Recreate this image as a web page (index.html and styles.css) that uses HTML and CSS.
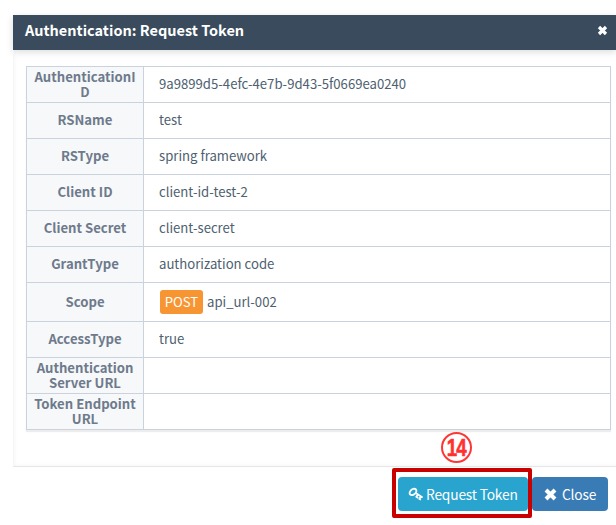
FILE: index.html
```html
<!DOCTYPE html>
<html lang="en">
<head>
<meta charset="utf-8">
<title>Authentication: Request Token</title>
<link rel="stylesheet" href="styles.css">
</head>
<body>
<div class="dialog">
  <header class="dialog-header">
    <h1 class="title">Authentication: Request Token</h1>
    <svg class="dismiss" viewBox="0 0 11 11"><path d="M2 2L9 9M9 2L2 9"/></svg>
  </header>
  <main class="dialog-body">
    <table class="details">
      <tr><th>AuthenticationI<br>D</th><td>9a9899d5-4efc-4e7b-9d43-5f0669ea0240</td></tr>
      <tr><th>RSName</th><td>test</td></tr>
      <tr><th>RSType</th><td>spring framework</td></tr>
      <tr><th>Client ID</th><td>client-id-test-2</td></tr>
      <tr><th>Client Secret</th><td>client-secret</td></tr>
      <tr><th>GrantType</th><td>authorization code</td></tr>
      <tr class="scope"><th>Scope</th><td><div class="scope-value"><span class="method">POST</span><span>api_url-002</span></div></td></tr>
      <tr><th>AccessType</th><td>true</td></tr>
      <tr><th>Authentication<br>Server URL</th><td></td></tr>
      <tr><th>Token Endpoint<br>URL</th><td></td></tr>
    </table>
  </main>
  <footer class="dialog-footer">
    <div class="button request">
      <svg class="key" viewBox="0 0 16 14"><path d="M2.2 7.6C0.6 6 2.6 2.6 5.2 1.9C7.6 1.3 8.9 3 8.2 5C7.5 7.2 4.2 9 2.2 7.6ZM7.4 5.8L14.6 10.6M9.8 7.6L8.4 9.8L10.2 11M12.8 9.4L11.4 11.8L13 12.6"/></svg>
      <span>Request Token</span>
    </div>
    <div class="button close">
      <svg class="cross" viewBox="0 0 13 13"><path d="M2 2L11 11M11 2L2 11"/></svg>
      <span>Close</span>
    </div>
  </footer>
</div>
<div class="highlight"></div>
<div class="step"><span>14</span></div>
</body>
</html>
```
FILE: styles.css
```css
* { box-sizing: border-box; }
body {
  margin: 0;
  height: 525px;
  overflow: hidden;
  background: #fff;
  color: #4e5f70;
  font: 13.15px/18px "Noto Sans CJK JP", "Noto Sans", sans-serif;
}
.dialog { margin: 15px 0 0 13px; }
.dialog-header {
  display: flex;
  justify-content: space-between;
  height: 35px;
  padding: 6px 8px 0 12px;
  background: #394b5c;
  color: #fff;
  box-shadow: 0 2px 7px rgba(0, 0, 0, 0.14);
}
.title { margin: 0; font-size: 14.5px; line-height: 18px; font-weight: 700; white-space: nowrap; }
.dismiss { width: 11px; height: 11px; margin-top: 4px; }
.dismiss, .cross { fill: none; stroke: #fff; stroke-width: 3.2; }
.dialog-body {
  height: 416px;
  padding: 16px 5px 0 12px;
  border-left: 1px solid #f6f6f6;
  box-shadow: inset 3px -3px 4px -3px rgba(0, 0, 0, 0.05);
}
.details {
  width: 585px;
  table-layout: fixed;
  border-collapse: collapse;
  box-shadow: 0 2px 1px rgba(0, 0, 0, 0.07);
}
.details tr { height: 36px; }
.details .scope { height: 39px; }
.details th, .details td { border: 1px solid #c9d2dd; padding: 0 0 2px; }
.details th {
  width: 117px;
  background: #f6f8f9;
  color: #6e7a8c;
  font-weight: 700;
  line-height: 15px;
  text-align: center;
  white-space: nowrap;
}
.details td { padding-left: 15px; background: #fff; white-space: nowrap; }
.details .scope td { padding-bottom: 0; }
.scope-value { display: flex; align-items: center; }
.method {
  width: 43px;
  height: 24px;
  margin: 0 4px 0 1px;
  border-radius: 3px;
  background: #f79533;
  color: #fff;
  line-height: 24px;
  text-align: center;
}
.dialog-footer {
  display: flex;
  justify-content: flex-end;
  gap: 4px;
  padding: 10px 8px 0 0;
  border-top: 1px solid #e6e6e6;
}
.button {
  display: flex;
  align-items: center;
  height: 34px;
  border-radius: 4px;
  color: #fff;
  font-size: 13.8px;
  letter-spacing: -0.2px;
  white-space: nowrap;
}
.request { width: 130px; padding-left: 10px; gap: 2px; background: #28a4cf; }
.close { width: 76px; padding-left: 12px; gap: 5px; background: #397bb4; }
.key { width: 16px; height: 14px; fill: none; stroke: #fff; stroke-width: 1.8; }
.cross { width: 13px; height: 13px; stroke-width: 4; }
.highlight {
  position: absolute;
  left: 392px;
  top: 468px;
  width: 140px;
  height: 50px;
  border: 4px solid #c90000;
  border-radius: 2px;
}
.step {
  position: absolute;
  left: 441px;
  top: 432px;
  width: 31px;
  height: 31px;
  border: 2px solid #ff3535;
  border-radius: 50%;
  color: #ff3030;
  font: bold 24px/27px "Liberation Sans", sans-serif;
  letter-spacing: -1px;
  display: flex;
  justify-content: center;
}
.step span { transform: scaleX(0.78); -webkit-text-stroke: 0.6px #ff3030; }
```
